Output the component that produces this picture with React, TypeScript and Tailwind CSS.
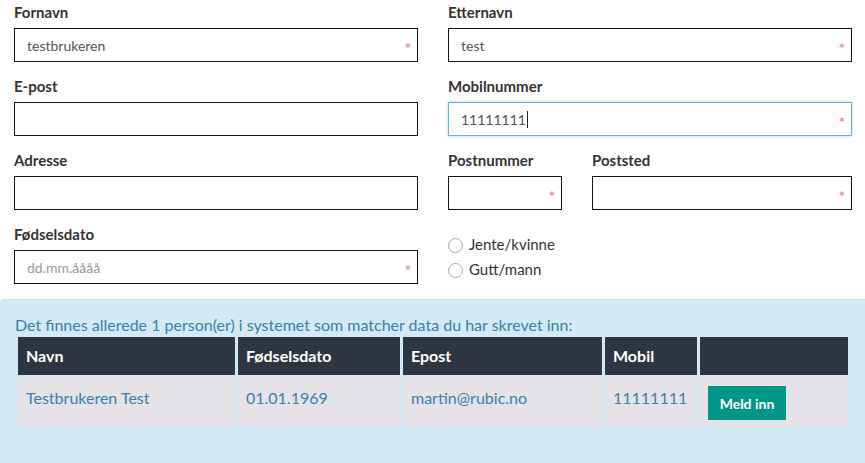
import React from "react";

const font = { fontFamily: "Lato, 'Noto Sans', sans-serif" };

function Field({
  label,
  value,
  placeholder,
  required,
  focused,
}: {
  label: string;
  value?: string;
  placeholder?: string;
  required?: boolean;
  focused?: boolean;
}) {
  return (
    <div className="flex flex-col">
      <label className="mb-[6px] text-[15px] font-bold leading-5 text-[#333]">{label}</label>
      <div
        className={
          "relative flex h-[34px] items-center border px-3 text-[14px] " +
          (focused
            ? "border-[#66afe9] shadow-[0_0_3px_rgba(102,175,233,0.6)]"
            : "border-[#111]")
        }
      >
        {value ? (
          <span className="text-[#555]">
            {value}
            {focused ? <span className="ml-px inline-block h-[17px] w-px translate-y-[3px] bg-[#222]" /> : null}
          </span>
        ) : (
          <span className="text-[#999]">{placeholder}</span>
        )}
        {required ? (
          <span className="absolute right-[6px] top-[12px] text-[15px] font-bold leading-none text-[#f58a8a]">*</span>
        ) : null}
      </div>
    </div>
  );
}

function Radio({ label }: { label: string }) {
  return (
    <label className="flex items-center gap-[6px] text-[15px] leading-5 text-[#333]">
      <span className="mt-[3px] inline-block h-[15px] w-[15px] rounded-full border border-[#aaa] bg-white" />
      {label}
    </label>
  );
}

const head = "flex h-[38px] items-center bg-[#2d3540] px-2 font-bold text-white";
const cell = "h-[50px] bg-[#e5e2e8] px-2 pt-[11px] leading-5 text-[#3a7fa6]";

export default function App() {
  return (
    <div className="h-[463px] w-[865px] overflow-hidden bg-white" style={font}>
      <div className="grid grid-cols-[404px_404px] gap-x-[30px] gap-y-[14px] px-[14px] pt-[2px]">
        <Field label="Fornavn" value="testbrukeren" required />
        <Field label="Etternavn" value="test" required />
        <Field label="E-post" />
        <Field label="Mobilnummer" value="11111111" required focused />
        <Field label="Adresse" />
        <div className="grid grid-cols-[114px_260px] gap-x-[30px]">
          <Field label="Postnummer" required />
          <Field label="Poststed" required />
        </div>
        <Field label="Fødselsdato" placeholder="dd.mm.åååå" required />
        <div className="flex flex-col gap-[5px] pt-[10px]">
          <Radio label="Jente/kvinne" />
          <Radio label="Gutt/mann" />
        </div>
      </div>

      <div className="mt-[15px] h-[200px] rounded-tl-[4px] border-t border-[#bde5ef] bg-[#d4e9f6] pt-[15px]">
        <p className="px-[15px] text-[16px] leading-5 text-[#3a7fa6]">
          Det finnes allerede 1 person(er) i systemet som matcher data du har skrevet inn:
        </p>
        <div className="ml-[18px] mt-[2px] grid w-[830px] grid-cols-[217px_162px_199px_92px_148px] gap-x-[3px] gap-y-[2px] text-[16px]">
          <div className={head}>Navn</div>
          <div className={head}>Fødselsdato</div>
          <div className={head}>Epost</div>
          <div className={head}>Mobil</div>
          <div className="h-[38px] bg-[#2d3540]" />
          <div className={cell}>Testbrukeren Test</div>
          <div className={cell}>01.01.1969</div>
          <div className={cell}>martin@rubic.no</div>
          <div className={cell}>11111111</div>
          <div className="h-[50px] bg-[#e5e2e8] px-2 pt-[9px]">
            <button
              type="button"
              className="h-[34px] w-[78px] bg-[#009688] text-[14px] font-bold text-white"
            >
              Meld inn
            </button>
          </div>
        </div>
      </div>
    </div>
  );
}
